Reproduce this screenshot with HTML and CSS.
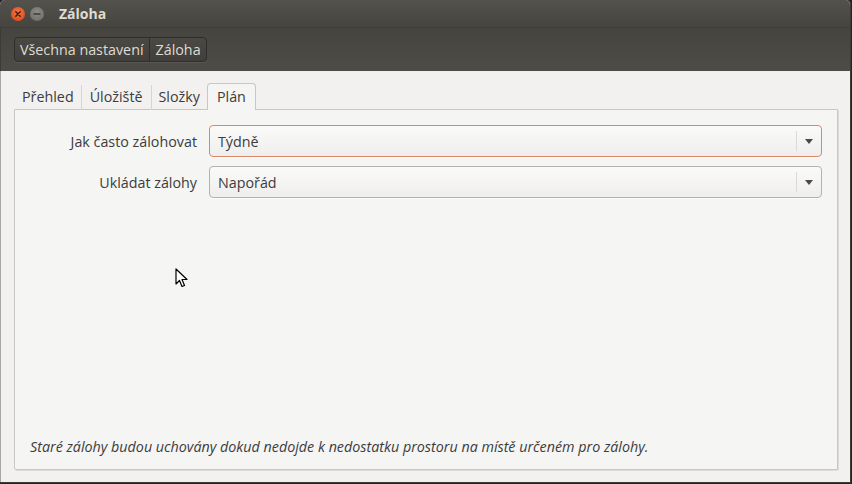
FILE: index.html
```html
<!DOCTYPE html>
<html>
<head>
<meta charset="utf-8">
<link rel="stylesheet" href="styles.css">
</head>
<body>
<div class="window">
  <div class="titlebar">
    <div class="wbtns">
      <span class="wbtn close"><svg width="14" height="14" viewBox="0 0 14 14"><path d="M4.8 4.8 L9.2 9.2 M9.2 4.8 L4.8 9.2" stroke="#3a1a10" stroke-width="1.4" stroke-linecap="round"/></svg></span>
      <span class="wbtn min"><svg width="14" height="14" viewBox="0 0 14 14"><path d="M4 7 H10" stroke="#3a3a36" stroke-width="1.4" stroke-linecap="round"/></svg></span>
    </div>
    <div class="title">Záloha</div>
  </div>
  <div class="toolbar">
    <div class="crumbs">
      <span class="crumb">Všechna nastavení</span>
      <span class="crumb">Záloha</span>
    </div>
  </div>
  <div class="content">
    <div class="tabs">
      <span class="tab">Přehled</span>
      <span class="tab">Úložiště</span>
      <span class="tab">Složky</span>
      <span class="tab active">Plán</span>
    </div>
    <div class="panel">
      <div class="form">
        <label class="lbl">Jak často zálohovat</label>
        <div class="combo focus"><span class="val">Týdně</span><span class="arrow"></span></div>
        <label class="lbl">Ukládat zálohy</label>
        <div class="combo"><span class="val">Napořád</span><span class="arrow"></span></div>
      </div>
      <div class="spacer">
        <svg class="cursor" width="14" height="22" viewBox="0 0 14 22"><path d="M1 1 L1 16 L4.5 12.5 L7 18.5 L9.5 17.5 L7 11.5 L12 11.5 Z" fill="#fff" stroke="#000" stroke-width="1.2" stroke-linejoin="round"/></svg>
      </div>
      <p class="note">Staré zálohy budou uchovány dokud nedojde k nedostatku prostoru na místě určeném pro zálohy.</p>
    </div>
  </div>
</div>
</body>
</html>
```
FILE: styles.css
```css
html, body {
  margin: 0;
  padding: 0;
  background: #2b1f2a;
}
body {
  width: 852px;
  height: 484px;
  overflow: hidden;
  font-family: "Open Sans", "Noto Sans", sans-serif;
  font-size: 14.3px;
}
.window {
  width: 851px;
  height: 483px;
  display: flex;
  flex-direction: column;
  background: #f2f1f0;
  border-radius: 5px 5px 0 0;
  overflow: hidden;
  border-right: 1px solid #3c3b37;
  border-bottom: 1px solid #3c3b37;
  box-sizing: border-box;
}
.titlebar {
  height: 28px;
  display: flex;
  align-items: center;
  background: linear-gradient(#53524d, #45443f);
  padding-left: 11px;
  border-bottom: 1px solid #3f3e3a;
  box-sizing: border-box;
}
.wbtns {
  display: flex;
  gap: 5px;
}
.wbtn {
  width: 14px;
  height: 14px;
  border-radius: 50%;
  display: flex;
}
.wbtn.close {
  background: radial-gradient(circle at 50% 40%, #f37a4c, #e0501f 70%, #b53c16);
}
.wbtn.min {
  background: radial-gradient(circle at 50% 40%, #8e8d88, #737270 70%, #5d5c58);
}
.title {
  color: #dfdbd2;
  font-weight: bold;
  font-size: 14px;
  margin-left: 15px;
  padding-bottom: 1px;
}
.toolbar {
  height: 43px;
  background: linear-gradient(#45443f, #4d4c47);
  display: flex;
  align-items: center;
  padding-left: 13px;
  border-left: 1px solid #3c3b37;
  box-sizing: border-box;
}
.crumbs {
  display: flex;
  border: 1px solid #2f2e2b;
  border-radius: 4px;
  background: linear-gradient(#4a4944, #403f3b);
  height: 25px;
  box-sizing: border-box;
  box-shadow: 0 1px 0 rgba(255,255,255,0.08);
}
.crumb {
  color: #dfdbd2;
  padding: 0 5px 0 5px;
  line-height: 23px;
}
.crumb + .crumb {
  border-left: 1px solid #2f2e2b;
  padding-left: 6px;
}
.content {
  flex: 1;
  display: flex;
  flex-direction: column;
  padding: 12px 12px 12px 13px;
  border-left: 1px solid #a8a7a4;
  box-sizing: border-box;
}
.tabs {
  display: flex;
  padding-left: 1px;
  align-items: flex-end;
  height: 27px;
  margin-bottom: -1px;
  position: relative;
  z-index: 1;
}
.tab {
  color: #3c3c3c;
  padding: 0 7px;
  height: 25px;
  line-height: 24px;
  border-right: 1px solid #d6d5d2;
  box-sizing: border-box;
}
.tab:nth-child(2) {
  padding: 0 8px;
}
.tab:nth-child(3) {
  border-right: none;
  padding: 0 7px;
}
.tab.active {
  height: 27px;
  line-height: 26px;
  padding: 0 9px;
  background: #f5f5f4;
  border: 1px solid #c8c7c4;
  border-bottom: none;
  border-radius: 4px 4px 0 0;
}
.panel {
  flex: 1;
  display: flex;
  flex-direction: column;
  background: #f5f5f4;
  border: 1px solid #c8c7c4;
  box-shadow: 1px 1px 0 #dcdbd8;
  border-radius: 0 0 2px 2px;
}
.form {
  display: grid;
  grid-template-columns: 182px 1fr;
  column-gap: 12px;
  row-gap: 9px;
  padding: 15px 15px 0 0;
  align-items: center;
}
.lbl {
  text-align: right;
  color: #3c3c3c;
}
.combo {
  height: 32px;
  box-sizing: border-box;
  border: 1px solid #b3b2ae;
  border-radius: 4px;
  background: linear-gradient(#fafaf9, #efeeed);
  display: flex;
  align-items: center;
  box-shadow: 0 1px 0 rgba(255,255,255,0.7);
}
.combo.focus {
  border-color: #d9886a;
}
.val {
  flex: 1;
  padding-left: 8px;
  color: #3c3c3c;
}
.arrow {
  width: 24px;
  height: 20px;
  border-left: 1px solid #dbdad7;
  display: flex;
  align-items: center;
  justify-content: center;
}
.arrow::after {
  content: "";
  width: 0;
  height: 0;
  border-left: 4px solid transparent;
  border-right: 4px solid transparent;
  border-top: 5px solid #4a4a4a;
}
.spacer {
  flex: 1;
  position: relative;
}
.cursor {
  position: absolute;
  left: 160px;
  top: 70px;
}
.note {
  margin: 0 0 13px 15px;
  font-style: italic;
  color: #3c3c3c;
}
```
